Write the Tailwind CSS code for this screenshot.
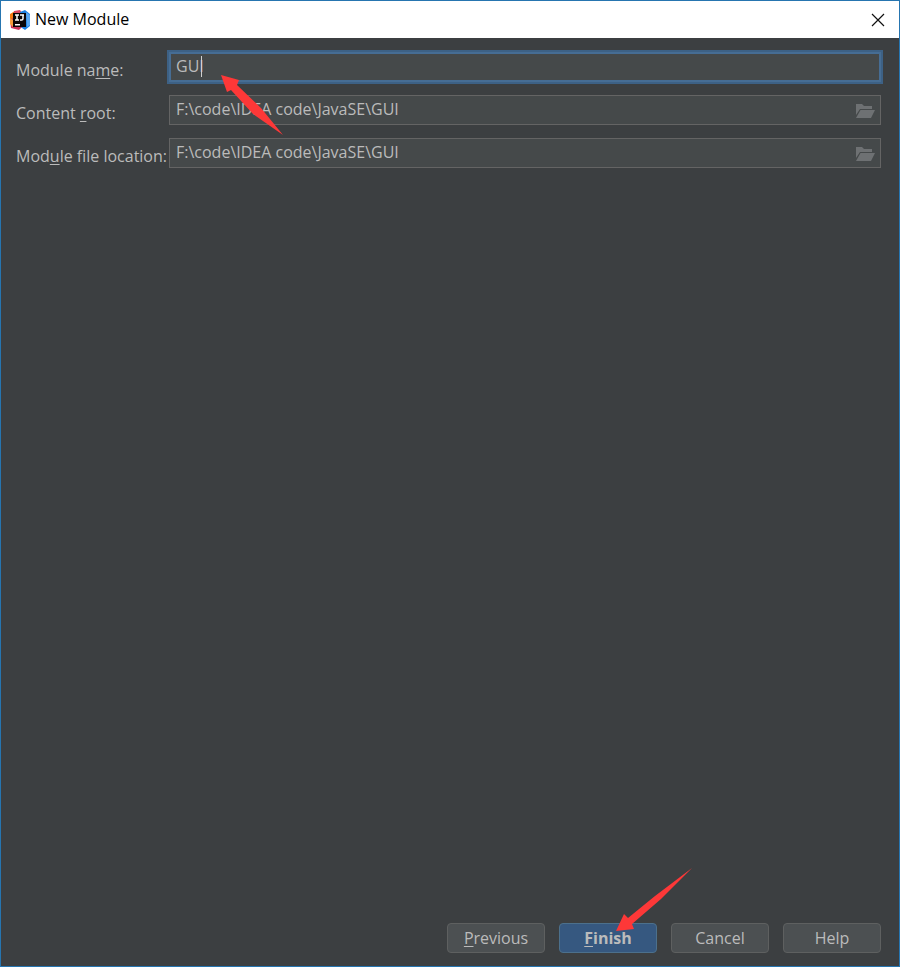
<!DOCTYPE html>
<html lang="en">
<head>
  <meta charset="UTF-8">
  <meta name="viewport" content="width=device-width, initial-scale=1.0">
  <title>New Module</title>
  <script src="https://cdn.jsdelivr.net/npm/@tailwindcss/browser@4"></script>
</head>
<body class="font-['Open_Sans','Noto_Sans',sans-serif] text-base text-[#bbbbbb]">
  <div class="relative flex min-h-screen flex-col border border-[#2675b0] bg-[#3c3f41]">

    <!-- Title bar -->
    <header class="flex h-[37px] items-center bg-white pr-[14px] pl-2 text-black">
      <svg class="h-[22px] w-[22px]" viewBox="0 0 22 22">
        <path fill="#f97a12" d="M1 5 6 2l5 4-6 6-4-2z" />
        <path fill="#d9455f" d="m5 2 6-1 2 3-6 6-3-3z" />
        <path fill="#1d7fe0" d="m11 3 5-2 5 4v12l-5 4-6-4z" />
        <path fill="#c8325a" d="m1 10 5-1 7 9-3 3-8-2z" />
        <path fill="#f59a3c" d="m1 9 3 2v7l-3-3z" />
        <path fill="#5aa7f0" d="m17 3 4 3v10l-3 2z" />
        <path fill="#0a0506" d="M4 4h13v14H4z" />
        <path fill="none" stroke="#fff" stroke-width="1.5" d="M6 6h4M8 6v5M6 11h4M11 6h4M14 6v3.500q0 1.500-1.500 1.500H11" />
        <path fill="#fff" d="M6 15h5v1.500H6z" />
      </svg>
      <h1 class="ml-1 flex-1 pb-px">New Module</h1>
      <button type="button" aria-label="Close">
        <svg class="h-[14px] w-[14px]" viewBox="0 0 14 14" fill="none" stroke="#111" stroke-width="1.2">
          <path d="m1 1 12 12M13 1 1 13" />
        </svg>
      </button>
    </header>

    <!-- Module settings -->
    <form id="module-form" class="flex flex-1 flex-col gap-[13px] pt-[14px] pr-[18px] pl-[15px]">
      <div class="flex items-start">
        <label for="module-name" class="w-[153px] shrink-0 pt-[6px] whitespace-nowrap">Module na<u class="underline-offset-2">m</u>e:</label>
        <div class="relative flex-1">
          <input id="module-name" type="text" value="GUI" class="block h-[30px] w-full border-2 border-[#466d94] bg-[#45494a] px-[5px] pb-[2px] ring-2 ring-[#3d6185] outline-none">
          <!-- text cursor -->
          <span class="absolute top-1 left-8 h-[21px] w-px bg-[#d0d0d0]"></span>
        </div>
      </div>
      <div class="flex items-start">
        <label for="content-root" class="w-[153px] shrink-0 pt-[6px] whitespace-nowrap">Content <u class="underline-offset-2">r</u>oot:</label>
        <div class="flex h-[30px] flex-1 items-center border border-[#646464] bg-[#45494a] pr-[5px]">
          <input id="content-root" type="text" value="F:\code\IDEA code\JavaSE\GUI" class="min-w-0 flex-1 px-[6px] pb-[2px] outline-none">
          <button type="button" aria-label="Browse content root">
            <svg class="mt-px h-4 w-[19px]" viewBox="0 0 19 16" fill="#6e7173">
              <path d="M0 1h6l2 2h8v3H4L0 12z" />
              <path d="M4.500 7H19l-4 8H0z" />
            </svg>
          </button>
        </div>
      </div>
      <div class="flex items-start">
        <label for="file-location" class="w-[153px] shrink-0 pt-[6px] whitespace-nowrap">Mod<u class="underline-offset-2">u</u>le file location:</label>
        <div class="flex h-[30px] flex-1 items-center border border-[#646464] bg-[#45494a] pr-[5px]">
          <input id="file-location" type="text" value="F:\code\IDEA code\JavaSE\GUI" class="min-w-0 flex-1 px-[6px] pb-[2px] outline-none">
          <button type="button" aria-label="Browse module file location">
            <svg class="mt-px h-4 w-[19px]" viewBox="0 0 19 16" fill="#6e7173">
              <path d="M0 1h6l2 2h8v3H4L0 12z" />
              <path d="M4.500 7H19l-4 8H0z" />
            </svg>
          </button>
        </div>
      </div>
    </form>

    <!-- Dialog buttons -->
    <footer class="flex justify-end gap-[14px] pr-[18px] pb-[13px]">
      <button type="button" class="h-[30px] w-[98px] rounded-[4px] border border-[#5e6060] bg-[#4c5052]"><u class="underline-offset-2">P</u>revious</button>
      <button type="submit" form="module-form" class="h-[30px] w-[98px] rounded-[4px] border border-[#4c708c] bg-[#365880] font-bold"><u class="underline-offset-2">F</u>inish</button>
      <button type="button" class="h-[30px] w-[98px] rounded-[4px] border border-[#5e6060] bg-[#4c5052]">Cancel</button>
      <button type="button" class="h-[30px] w-[98px] rounded-[4px] border border-[#5e6060] bg-[#4c5052]">Help</button>
    </footer>

    <!-- Annotation arrows -->
    <svg class="pointer-events-none absolute top-[74px] left-[219px] h-[61px] w-[64px]" viewBox="0 0 64 61" fill="#fd3838">
      <path d="M1 0 19 5 17 10 41 33 63 60 33 39 11 15 7 17z" />
    </svg>
    <svg class="pointer-events-none absolute right-[206px] bottom-[34px] h-[64px] w-[77px]" viewBox="0 0 77 64" fill="#fd3838">
      <path d="M0 63 8 46 12 50 39 28 76 0 45 31 16 56 18 61z" />
    </svg>
  </div>
</body>
</html>
